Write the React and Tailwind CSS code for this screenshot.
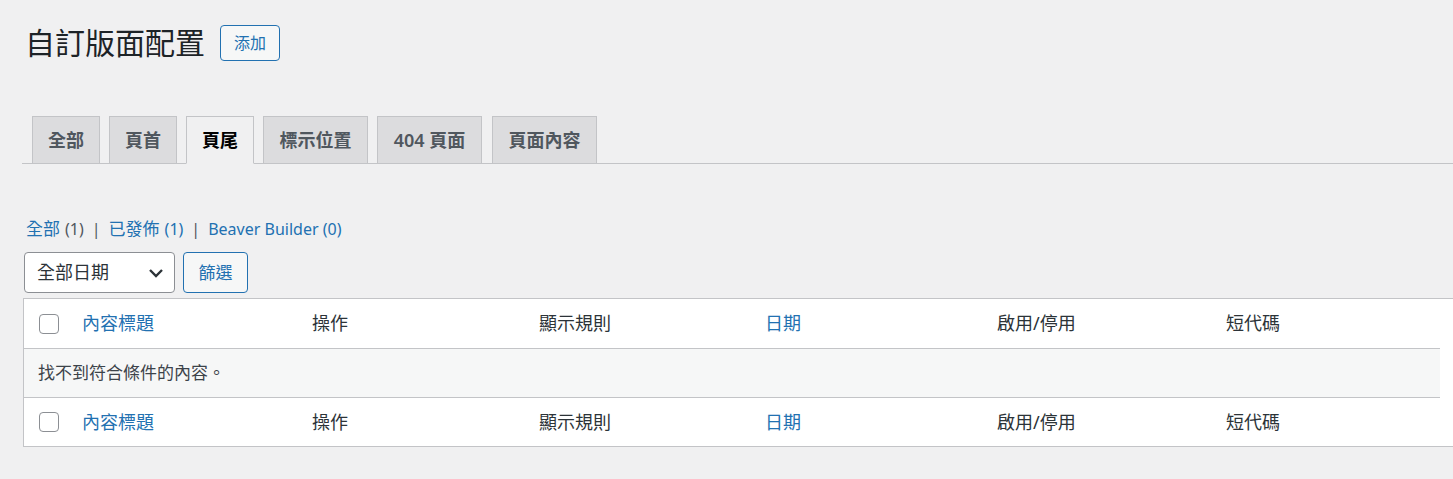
import { useState } from "react";

const tabs = [
  { label: "全部", cls: "w-[68px]" },
  { label: "頁首", cls: "w-[68px]" },
  { label: "頁尾", cls: "w-[68px]" },
  { label: "標示位置", cls: "w-[105px]" },
  { label: "404 頁面", cls: "w-[105px]" },
  { label: "頁面內容", cls: "ml-[1px] w-[105px]" },
];

const columns = [
  { label: "操作", w: "w-[227px]" },
  { label: "顯示規則", w: "w-[226px]" },
  { label: "日期", w: "w-[232px]", link: true },
  { label: "啟用/停用", w: "w-[229px]" },
  { label: "短代碼", w: "w-[200px]" },
];

function HeadRow({ tall }) {
  return (
    <div className={`flex items-center ${tall ? "h-[49px]" : "h-[48px]"}`}>
      <div className="w-[58px] pl-[15px]">
        <span className="block h-[20px] w-[20px] rounded-[4px] border border-[#8c8f94] bg-white" />
      </div>
      <div className="w-[230px] text-[18px] text-[#2271b1]">內容標題</div>
      {columns.map((c) => (
        <div
          key={c.label}
          className={`${c.w} text-[18px] ${c.link ? "text-[#2271b1]" : "text-[#2c3338]"}`}
        >
          {c.label}
        </div>
      ))}
    </div>
  );
}

export default function App() {
  const [active, setActive] = useState("頁尾");

  return (
    <div className="min-h-[479px] w-full overflow-hidden bg-[#f0f0f1] font-['Noto_Sans','Noto_Sans_CJK_TC',sans-serif] text-[#3c434a]">
      <div className="pl-[22px]">
        {/* page title */}
        <div className="flex items-center pt-[25px]">
          <h1 className="ml-[3px] text-[30px] font-normal leading-[36px] text-[#1d2327]">自訂版面配置</h1>
          <button className="ml-[15px] h-[36px] w-[60px] rounded-[4px] border border-[#2271b1] bg-[#f6f7f7] text-[16px] text-[#2271b1]">
            添加
          </button>
        </div>

        {/* tabs */}
        <div className="mt-[55px] flex gap-[9px] border-b border-[#c3c4c7] pl-[10px]">
          {tabs.map((t) => (
            <button
              key={t.label}
              onClick={() => setActive(t.label)}
              className={`-mb-px h-[48px] border border-[#c3c4c7] text-[18px] font-semibold ${t.cls} ${
                active === t.label
                  ? "border-b-[#f0f0f1] bg-[#f0f0f1] text-black"
                  : "bg-[#dcdcde] text-[#50575e]"
              }`}
            >
              {t.label}
            </button>
          ))}
        </div>

        {/* status links */}
        <div className="mt-[52px] flex h-[26px] items-center pl-[4px] text-[16px]">
          <span className="text-[17px] text-[#2271b1]">全部</span>
          <span className="ml-[5px] text-[#50575e]">(1)</span>
          <span className="mx-[8px] text-[#50575e]">|</span>
          <span className="text-[17px] text-[#2271b1]">已發佈</span>
          <span className="ml-[5px] text-[#2271b1]">(1)</span>
          <span className="mx-[8px] text-[#50575e]">|</span>
          <span className="text-[#2271b1]">Beaver Builder (0)</span>
        </div>

        {/* filters */}
        <div className="mt-[10px] flex items-center gap-[8px] pl-[2px]">
          <div className="flex h-[41px] w-[151px] items-center justify-between rounded-[4px] border border-[#8c8f94] bg-white pl-[12px] pr-[10px] text-[18px] text-[#2c3338]">
            <span>全部日期</span>
            <svg width="16" height="10" viewBox="0 0 16 10" fill="none">
              <path d="M2 2l6 6 6-6" stroke="#2c3338" strokeWidth="2.4" />
            </svg>
          </div>
          <button className="h-[41px] w-[65px] rounded-[4px] border border-[#2271b1] bg-[#f6f7f7] text-[17px] text-[#2271b1]">
            篩選
          </button>
        </div>

        {/* table */}
        <div className="ml-[1px] mt-[5px] w-[1480px] border border-[#c3c4c7] bg-white">
          <HeadRow tall />
          <div className="flex h-[50px] w-[1416px] items-center border-y border-[#c3c4c7] bg-[#f6f7f7] pl-[14px] text-[17px] text-[#3c434a]">
            找不到符合條件的內容。
          </div>
          <HeadRow />
        </div>
      </div>
    </div>
  );
}
